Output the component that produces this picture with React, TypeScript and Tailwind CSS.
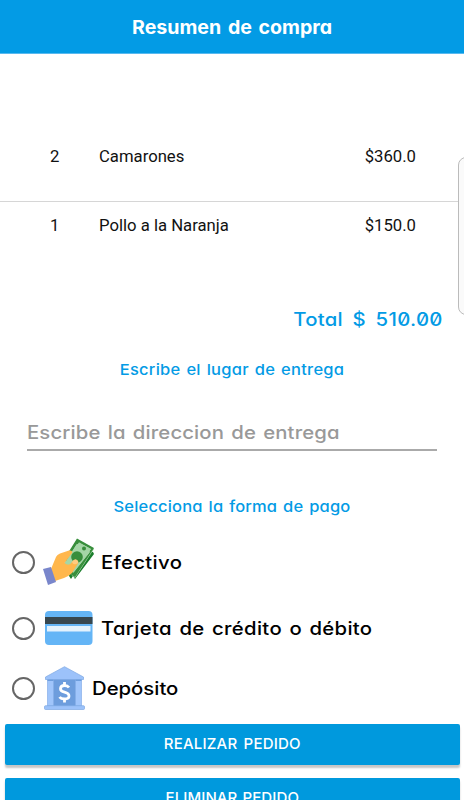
import React, { useState } from 'react';

interface OrderItem {
  id: number;
  quantity: number;
  name: string;
  price: string;
}

const items: OrderItem[] = [
  { id: 1, quantity: 2, name: 'Camarones', price: '$360.0' },
  { id: 2, quantity: 1, name: 'Pollo a la Naranja', price: '$150.0' },
];

const CashIcon: React.FC = () => (
  <svg className="w-[52px] h-[48px] shrink-0" viewBox="0 0 52 48">
    <path d="M31 11L50 14L51 16L32 41L30 38L28 41L26 38Z" fill="#1b7e2c" />
    <path d="M34 1L51 11L32 40L19 29Z" fill="#a5d6a7" />
    <path d="M34 0.5L51 10L32 39L27 36L28 33.5L30.5 34.5L46.5 14.5Q46 12.5 48 11L36 4.5Q35.5 6.5 33.5 6.5L23 23L20 23Z" fill="#388e3c" />
    <path d="M33.5 6.5Q35.5 6.5 36 4.5L48 11Q46 12.5 46.5 14.5L30.5 34.5L28 33.5L22 25Z" fill="#a5d6a7" />
    <circle cx="41" cy="10.5" r="2" fill="#388e3c" />
    <circle cx="34" cy="19" r="5.8" fill="#388e3c" />
    <path d="M8 31L13 19Q14 16.5 17 15.5L26 12.5Q30 12 29 15L21.5 25Q26 29 29 24Q32 20 35 23Q36 25 34 27L29 35Q26 38 21 40L12 43Z" fill="#ffb74d" />
    <path d="M29 24Q32 19 35 23Q36 25 33 26Q30 27 29 24Z" fill="#ffcc80" />
    <path d="M0 31L8 29L13 44L5 47Z" fill="#7986cb" />
  </svg>
);

const CardIcon: React.FC = () => (
  <svg className="w-[48px] h-[34px] shrink-0" viewBox="0 0 48 34">
    <rect width="47.5" height="34" rx="4" fill="#64b5f6" />
    <rect y="6" width="47.5" height="7" fill="#37474f" />
    <rect x="2" y="15" width="43.5" height="5.5" fill="#e3f2fd" />
  </svg>
);

const BankIcon: React.FC = () => (
  <svg className="w-[41px] h-[44px] shrink-0" viewBox="0 0 41 44">
    <path d="M5 13H36V40H5Z" fill="#6d9ddd" />
    <path d="M1.5 11L20.5 0.7L39.5 11V13.5H1.5Z" fill="#9cc2fa" stroke="#7da7e3" strokeWidth="0.7" />
    <path d="M3.5 13.5H9.5V40H3.5ZM31.5 13.5H37.5V40H31.5Z" fill="#a0c5fb" stroke="#86afe8" strokeWidth="0.7" />
    <path d="M3.5 13.5H9.5V15H3.5ZM31.5 13.5H37.5V15H31.5Z" fill="#6d9ddd" />
    <rect x="0.5" y="39.7" width="40" height="3.8" rx="1" fill="#9cc2fa" stroke="#7da7e3" strokeWidth="0.7" />
    <path d="M25 21.5Q23.5 19.5 20.5 19.5Q16.5 19.5 16.5 22.8Q16.5 25.3 20.5 26.1Q25 27.3 25 30Q25 33 20.5 33Q17 33 15.5 31M20.5 16V20M20.5 33V36.5" fill="none" stroke="#fff" strokeWidth="2.8" />
  </svg>
);

interface PaymentOptionProps {
  label: string;
  icon: React.ReactNode;
  checked: boolean;
  onSelect: () => void;
  className: string;
  labelClassName: string;
}

const PaymentOption: React.FC<PaymentOptionProps> = ({ label, icon, checked, onSelect, className, labelClassName }) => (
  <button type="button" role="radio" aria-checked={checked} onClick={onSelect} className={`flex items-center w-full pl-3 ${className}`}>
    <span className="flex items-center justify-center w-[23px] h-[23px] rounded-full border-2 border-[#666] shrink-0">
      {checked && <span className="w-3 h-3 rounded-full bg-[#039be5]" />}
    </span>
    {icon}
    <span className={`pt-0.5 text-[18.3px] font-medium text-black [word-spacing:1.5px] whitespace-nowrap origin-left scale-x-[1.11] ${labelClassName}`}>{label}</span>
  </button>
);

const App: React.FC = () => {
  const [payment, setPayment] = useState('');
  const [address, setAddress] = useState('');

  return (
    <div className="relative w-[464px] h-[800px] overflow-hidden bg-white font-['Inter',sans-serif] [font-feature-settings:'cv11','zero']">
      {/* Header */}
      <header className="flex items-center justify-center h-[54px] pt-[3px] bg-[#039be5] border-b border-[#58b9ef]">
        <h1 className="text-[19px] font-bold text-white [word-spacing:2px] whitespace-nowrap scale-x-[1.03]">Resumen de compra</h1>
      </header>

      {/* Order items */}
      <div className="pt-[58px] font-['Roboto',sans-serif] text-[16.7px] leading-6 text-[#111]">
        {items.map((item) => (
          <div key={item.id} className="flex items-center pl-[50px] pr-12 h-[90px] border-b border-[#d6d6d6] last:h-12 last:border-b-0">
            <span className="w-[49px]">{item.quantity}</span>
            <span className="flex-1">{item.name}</span>
            <span>{item.price}</span>
          </div>
        ))}
      </div>

      {/* Total */}
      <div className="flex justify-end pr-[21px] mt-[56px] h-7 items-center text-[18.3px] font-medium text-[#039be5]">
        <span className="origin-right scale-x-[1.11] tracking-[0.27px] [word-spacing:3.5px] whitespace-nowrap">Total $ 510.00</span>
      </div>

      {/* Delivery address */}
      <h2 className="mt-[24px] h-6 leading-6 text-center text-[15px] font-medium text-[#039be5] tracking-[0.22px] [word-spacing:1.2px] scale-x-110">Escribe el lugar de entrega</h2>
      <div className="mx-[27px] mt-8 border-b-2 border-[#aaa]">
        <input
          value={address}
          onChange={(e) => setAddress(e.target.value)}
          placeholder="Escribe la direccion de entrega"
          className="block w-[90%] h-[35px] pt-px outline-none text-[18.3px] font-medium tracking-[0.12px] [word-spacing:1.5px] placeholder:text-[#999] origin-left scale-x-[1.11]"
        />
      </div>

      {/* Payment method */}
      <h2 className="mt-[44px] h-6 leading-6 text-center text-[15px] font-medium text-[#039be5] tracking-[0.15px] [word-spacing:1.2px] scale-x-110">Selecciona la forma de pago</h2>
      <div role="radiogroup">
        <PaymentOption
          label="Efectivo"
          icon={<span className="ml-2"><CashIcon /></span>}
          checked={payment === 'cash'}
          onSelect={() => setPayment('cash')}
          className="mt-[18px] h-[50px]"
          labelClassName="ml-[6px] tracking-[0.3px]"
        />
        <PaymentOption
          label="Tarjeta de crédito o débito"
          icon={<span className="ml-[10px]"><CardIcon /></span>}
          checked={payment === 'card'}
          onSelect={() => setPayment('card')}
          className="mt-[18px] h-[46px]"
          labelClassName="ml-[8px] tracking-[0.3px]"
        />
        <PaymentOption
          label="Depósito"
          icon={<span className="ml-[9px]"><BankIcon /></span>}
          checked={payment === 'deposit'}
          onSelect={() => setPayment('deposit')}
          className="mt-[14px] h-[46px]"
          labelClassName="ml-[7px]"
        />
      </div>

      {/* Actions */}
      <div className="flex flex-col gap-[13px] mt-[13px] pl-[4.5px] pr-1">
        <button type="button" className="h-[41px] rounded-xs bg-[#0099dd] text-[15px] font-medium text-white tracking-[0.2px] [word-spacing:2px] shadow-[0_3px_2px_#c6c6c6]">
          REALIZAR PEDIDO
        </button>
        <button type="button" className="h-[41px] rounded-xs bg-[#0099dd] text-[15px] font-medium text-white tracking-[0.1px] [word-spacing:1px] shadow-[0_3px_2px_#c6c6c6]">
          ELIMINAR PEDIDO
        </button>
      </div>

      {/* Drawer handle peeking over the right edge */}
      <div className="absolute left-[458px] top-[157px] w-6 h-[158px] rounded-lg border border-[#bbb] bg-[#fafafa]" />
    </div>
  );
};

export default App;
